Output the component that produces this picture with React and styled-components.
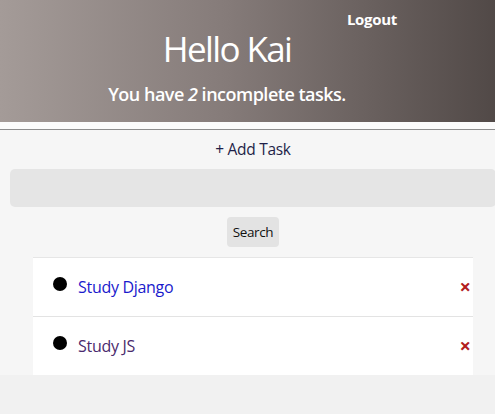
import styled, { createGlobalStyle } from "styled-components";

const GlobalStyle = createGlobalStyle`
  body {
    margin: 0;
    background-color: #f1f1f1;
    font-family: "Open Sans", "Noto Sans", sans-serif;
    overflow-x: hidden;
  }
`;

const Wrapper = styled.div`
  width: 506px;
  background-color: #f6f6f6;
  box-shadow: 0 3px 10px rgba(0, 0, 0, 0.14);
`;

const Header = styled.div`
  display: flex;
  flex-direction: column;
  align-items: center;
  height: 122px;
  box-sizing: border-box;
  padding: 8px 52px 0 0;
  background: linear-gradient(90deg, #a49b98 0%, #857b79 45%, #4f4745 100%);
  color: white;
`;

const Logout = styled.a`
  align-self: flex-end;
  margin-right: 57px;
  font-size: 15px;
  font-weight: 700;
  line-height: 22px;
  letter-spacing: -0.3px;
  color: white;
  text-decoration: none;
`;

const Title = styled.h1`
  margin: -3px 0 0;
  font-size: 35px;
  font-weight: 400;
  line-height: 44px;
  letter-spacing: -1.6px;
`;

const Subtitle = styled.h3`
  margin: 11px 0 0;
  font-size: 18px;
  font-weight: 600;
  line-height: 24px;
  letter-spacing: -0.5px;
`;

const Divider = styled.div`
  height: 7px;
  background-color: #fbfbfb;
  border-bottom: 1px solid #8d8d8d;
`;

const Body = styled.div`
  display: flex;
  flex-direction: column;
  align-items: center;
  padding: 9px 10px 0;
`;

const AddLink = styled.a`
  font-size: 15.5px;
  line-height: 20px;
  letter-spacing: -0.3px;
  color: #1f1f48;
  text-decoration: none;
`;

const SearchInput = styled.input`
  align-self: stretch;
  height: 36px;
  margin-top: 10px;
  border: none;
  border-radius: 5px;
  background-color: #e5e5e5;
`;

const SearchButton = styled.button`
  margin-top: 10px;
  padding: 0 6px;
  height: 30px;
  border: none;
  border-radius: 4px;
  background-color: #e3e3e3;
  font-family: inherit;
  font-size: 13.5px;
  letter-spacing: -0.4px;
  color: #111;
`;

const List = styled.div`
  align-self: stretch;
  margin: 10px 23px 0;
  background-color: white;
  border-top: 1px solid #e6e6e6;
`;

const Row = styled.div`
  display: flex;
  align-items: center;
  height: 58px;
  padding: 0 2px 0 20px;
  border-bottom: ${(props) => (props.last ? "none" : "1px solid #e3e3e3")};
`;

const Dot = styled.span`
  width: 14px;
  height: 14px;
  margin: -6px 11px 0 0;
  border-radius: 50%;
  background-color: black;
`;

const TaskLink = styled.a`
  flex: 1;
  font-size: 16px;
  letter-spacing: -0.3px;
  color: ${(props) => (props.visited ? "#4a2a6d" : "#1a1acc")};
  text-decoration: none;
`;

const Remove = styled.a`
  font-size: 20px;
  font-weight: 700;
  line-height: 22px;
  color: #b21d1d;
  text-decoration: none;
`;

const tasks = [
  { title: "Study Django", visited: false },
  { title: "Study JS", visited: true },
];

export default function App() {
  return (
    <>
      <GlobalStyle />
      <Wrapper>
        <Header>
          <Logout href="#">Logout</Logout>
          <Title>Hello Kai</Title>
          <Subtitle>
            You have <i>2</i> incomplete tasks.
          </Subtitle>
        </Header>
        <Divider />
        <Body>
          <AddLink href="#">+ Add Task</AddLink>
          <SearchInput type="text" />
          <SearchButton>Search</SearchButton>
          <List>
            {tasks.map((task, i) => (
              <Row key={task.title} last={i === tasks.length - 1}>
                <Dot />
                <TaskLink href="#" visited={task.visited}>
                  {task.title}
                </TaskLink>
                <Remove href="#">×</Remove>
              </Row>
            ))}
          </List>
        </Body>
      </Wrapper>
    </>
  );
}
